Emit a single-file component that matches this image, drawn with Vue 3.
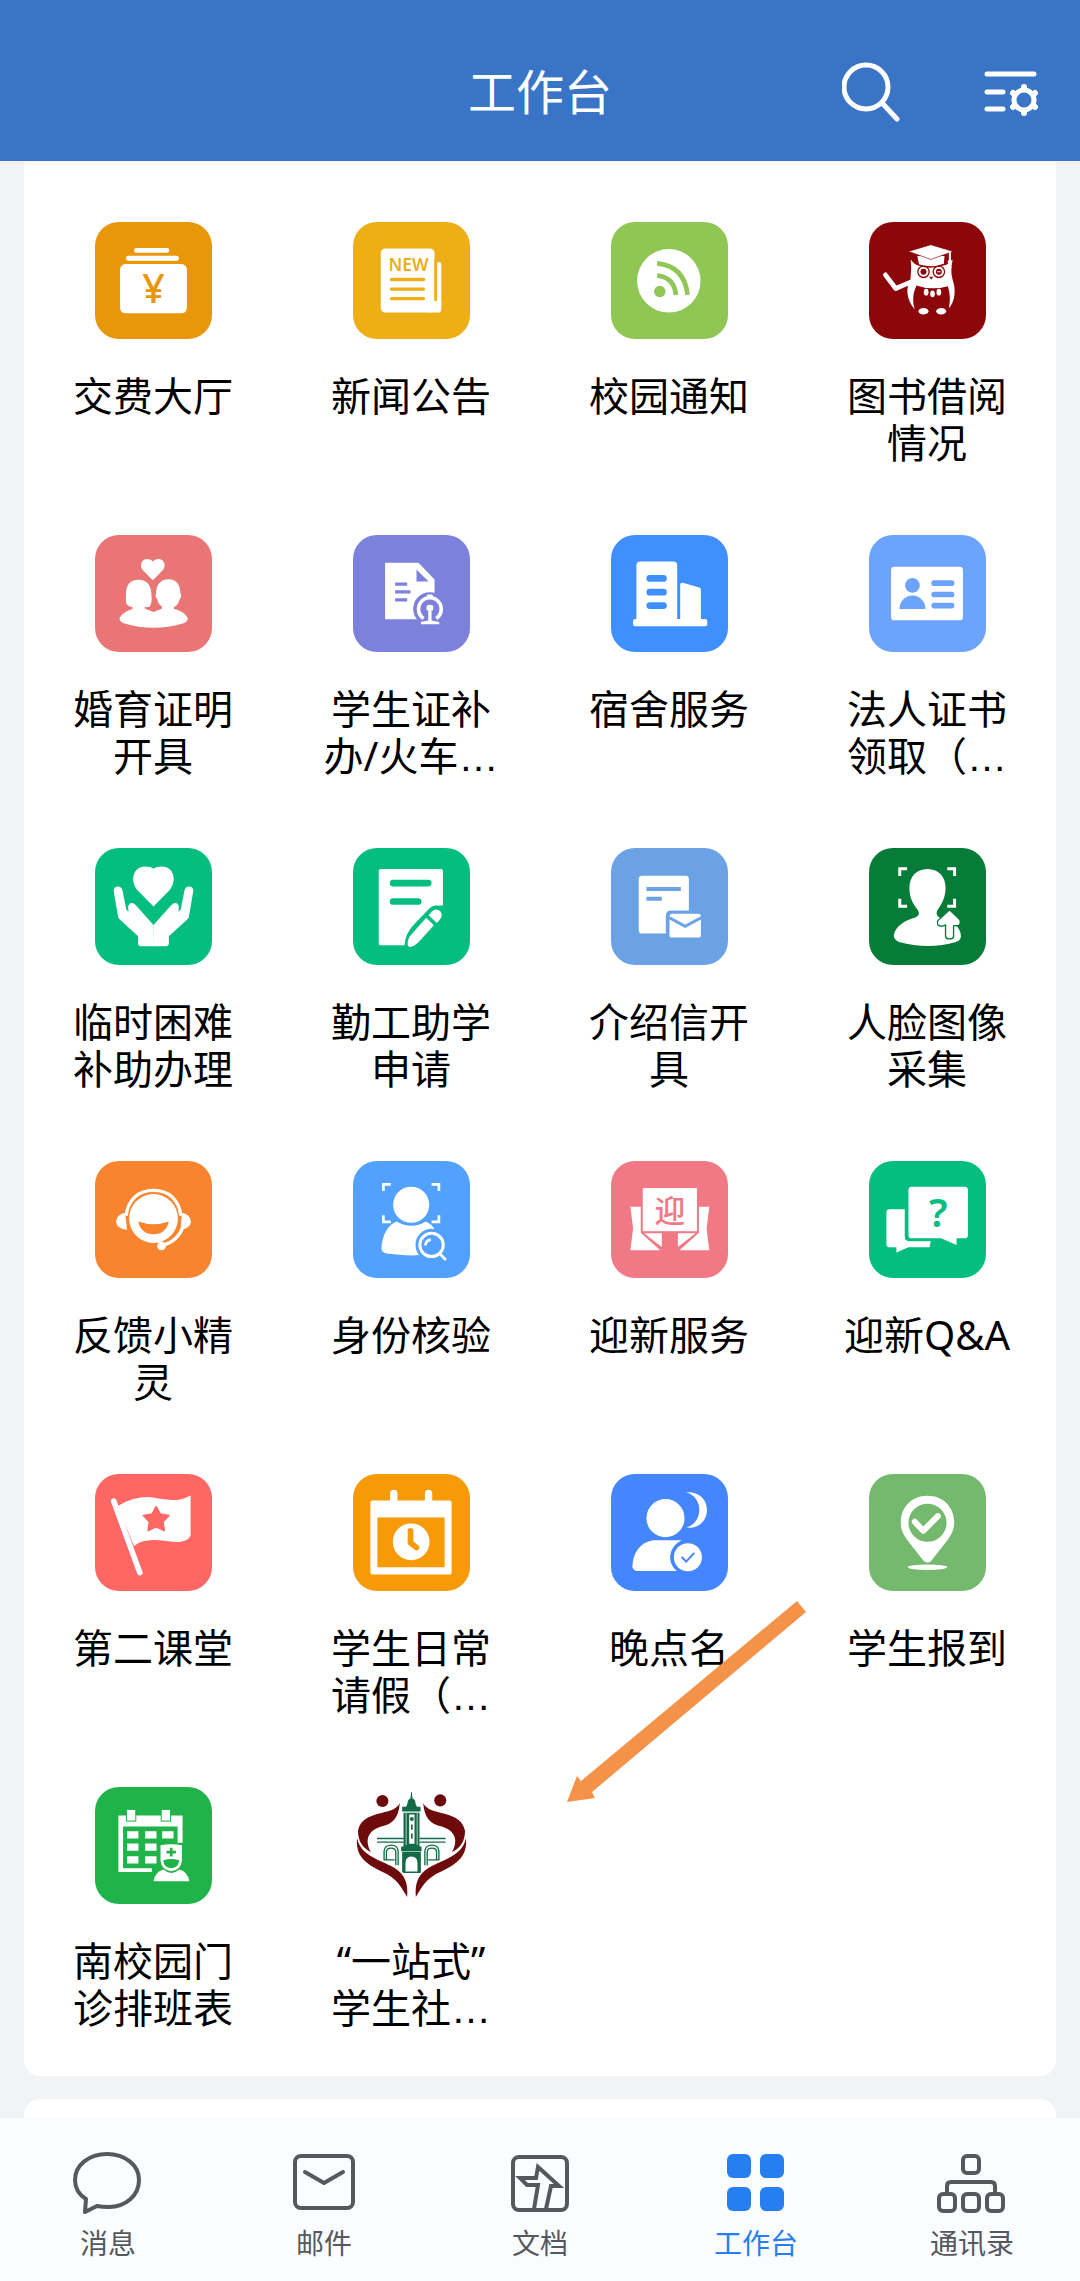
<template>
  <div class="workbench">
    <header class="top-bar">
      <h1 class="top-title">工作台</h1>
      <div class="top-actions">
        <button type="button" class="top-btn" aria-label="搜索">
          <svg width="60" height="60" viewBox="0 0 60 60" fill="none" stroke="#fff" stroke-width="5" stroke-linecap="round">
            <circle cx="24" cy="25" r="22" />
            <path d="M41 42L55 57" />
          </svg>
        </button>
        <button type="button" class="top-btn" aria-label="设置">
          <svg width="56" height="60" viewBox="0 0 56 60" fill="none" stroke="#fff" stroke-width="5" stroke-linecap="round">
            <path d="M3 12H50M3 30H19M3 47H19" />
            <circle cx="40" cy="38" r="10" />
            <path stroke-width="6" d="M40 26V25M40 50V51M50 32L51 31M50 44L51 45M30 32L29 31M30 44L29 45" />
          </svg>
        </button>
      </div>
    </header>

    <main class="content">
      <section class="card">
        <ul class="app-grid">
          <li v-for="app in apps" :key="app.name">
            <a href="#" class="app-link">
              <svg class="app-icon" viewBox="0 0 350 350" :style="{ background: app.color, color: app.color }" v-html="app.icon"></svg>
              <span class="app-name">{{ app.name }}<span v-if="app.cut" class="dots">…</span></span>
            </a>
          </li>
        </ul>
        <svg class="pointer" width="240" height="202" viewBox="0 0 240 202">
          <path d="M230 0L239 11L25 191L28 197L0 201L10 175L14 180Z" fill="#f4924a" />
        </svg>
      </section>
      <section class="card next-card"></section>
    </main>

    <nav class="tab-bar">
      <a v-for="tab in tabs" :key="tab.name" href="#" class="tab" :class="{ active: tab.active }">
        <svg class="tab-icon" viewBox="0 0 72 64" v-html="tab.icon"></svg>
        <span>{{ tab.name }}</span>
      </a>
    </nav>
  </div>
</template>

<script setup>
// Внутри иконок currentColor — это цвет плитки
const apps = [
  {
    name: '交费大厅',
    color: '#e8960a',
    icon: `<g fill="#fff"><rect x="117" y="78" width="105" height="14" rx="6"/><rect x="93" y="101" width="158" height="15" rx="7"/><rect x="75" y="126" width="200" height="147" rx="16"/></g>
      <text x="175" y="241" font-size="118" font-weight="500" text-anchor="middle" fill="currentColor">¥</text>`
  },
  {
    name: '新闻公告',
    color: '#eeae15',
    icon: `<g fill="#fff"><rect x="83" y="79" width="161" height="192" rx="14"/><rect x="251" y="120" width="13" height="140" rx="6"/><path d="M225 236H264V261Q264 271 254 271H225Z"/></g>
      <path d="M247 110V234" stroke="currentColor" stroke-width="7"/>
      <text x="166" y="148" font-size="52" font-weight="600" text-anchor="middle" fill="currentColor">NEW</text>
      <path d="M115 172H211M115 201H211M115 229H211" stroke="currentColor" stroke-width="10" stroke-linecap="round"/>`
  },
  {
    name: '校园通知',
    color: '#8fc654',
    icon: `<circle cx="173" cy="176" r="95" fill="#fff"/><circle cx="146" cy="208" r="17" fill="currentColor"/>
      <path d="M138 160Q190 166 194 218M138 124Q220 132 229 218" fill="none" stroke="currentColor" stroke-width="14"/>`
  },
  {
    name: '图书借阅情况',
    color: '#8c0709',
    icon: `<path d="M49 158L80 199L124 180" fill="none" stroke="#fff" stroke-width="14" stroke-linecap="round" stroke-linejoin="round"/>
      <path d="M125 112Q136 128 150 130H222Q238 128 250 112Q243 148 250 172C262 205 256 240 239 258Q246 222 236 192Q186 206 142 190C130 215 130 240 137 262C110 230 110 195 124 172Q128 140 125 112Z" fill="#fff"/>
      <path d="M142 100L148 128Q187 142 226 126L228 100Z" fill="#fff" stroke="currentColor" stroke-width="4"/>
      <path d="M118 88L185 68L252 88L185 112Z" fill="#fff" stroke="currentColor" stroke-width="2"/>
      <path d="M242 90V114" stroke="#fff" stroke-width="6"/><circle cx="242" cy="120" r="7" fill="#fff"/>
      <g fill="none" stroke="currentColor" stroke-width="4"><circle cx="163" cy="149" r="17"/><circle cx="209" cy="149" r="17"/></g>
      <circle cx="163" cy="149" r="9" fill="currentColor"/><circle cx="209" cy="149" r="9" fill="currentColor"/><path d="M204 149H214" stroke="#fff" stroke-width="3"/>
      <path d="M180 164H192L186 173Z" fill="currentColor"/>
      <g fill="#fff"><ellipse cx="171" cy="210" rx="7" ry="10"/><ellipse cx="190" cy="215" rx="7" ry="10"/><ellipse cx="209" cy="210" rx="7" ry="10"/><ellipse cx="163" cy="267" rx="15" ry="10"/><ellipse cx="216" cy="267" rx="15" ry="10"/></g>`
  },
  {
    name: '婚育证明开具',
    color: '#e97675',
    icon: `<g fill="#fff"><path d="M173 135L142 104C132 91 140 72 156 72Q168 72 173 80Q178 72 190 72C206 72 214 91 204 104Z"/>
      <path d="M93 182C91 150 105 134 130 134C155 134 169 150 169 182C170 195 170 205 164 214Q154 218 149 215V222H112V215Q100 216 94 206Q91 195 93 182Z"/>
      <path d="M183 172C184 146 198 132 220 132C242 132 254 146 255 170L258 183L252 196Q247 211 236 216V222H200V214Q188 206 187 194L181 184Z"/>
      <path d="M73 250C80 235 98 225 118 220H148L175 230L202 220H232C254 225 272 235 278 250Q276 260 265 264Q175 291 86 264Q74 259 73 250Z"/></g>`
  },
  {
    name: '学生证补办/火车',
    cut: true,
    color: '#7c81dc',
    icon: `<path d="M96 83H196L244 133V252H96Z" fill="#fff"/><path d="M190 103V139H226Z" fill="currentColor"/>
      <path d="M126 147H162M126 170H172M126 194H162" stroke="currentColor" stroke-width="10"/>
      <circle cx="230" cy="221" r="50" fill="currentColor"/>
      <path d="M211 250A34 34 0 1 1 249 250" fill="none" stroke="#fff" stroke-width="11"/>
      <g fill="#fff"><rect x="221" y="178" width="18" height="12" rx="4"/><path d="M220 214Q220 209 230 209Q240 209 240 214V225H235V256L258 260V267H203V260L225 256V225H220Z"/></g>`
  },
  {
    name: '宿舍服务',
    color: '#3f8fff',
    icon: `<g fill="#fff"><rect x="76" y="79" width="122" height="184" rx="12"/><path d="M207 255V149Q207 141 215 143L264 157Q269 158 269 164V255Z"/><rect x="66" y="251" width="222" height="22" rx="6"/></g>
      <path d="M116 130H157M116 171H157M116 211H157" stroke="currentColor" stroke-width="20" stroke-linecap="round"/>`
  },
  {
    name: '法人证书领取（',
    cut: true,
    color: '#6ca4fd',
    icon: `<rect x="66" y="95" width="215" height="160" rx="10" fill="#fff"/>
      <circle cx="130" cy="151" r="22" fill="currentColor"/><path d="M91 221A39 40 0 0 1 169 221Z" fill="currentColor"/>
      <path d="M195 144H247M195 178H247M195 211H247" stroke="currentColor" stroke-width="17" stroke-linecap="round"/>`
  },
  {
    name: '临时困难补助办理',
    color: '#04be80',
    icon: `<g fill="#fff"><path d="M175 175L128 127C103 97 114 56 149 55Q167 55 175 62Q183 55 201 55C236 56 247 97 222 127Z"/>
      <path d="M175 230L122 171Q113 161 104 166Q96 173 101 190Q93 187 93 181L82 126Q79 114 67 115Q55 117 56 129L69 205Q70 211 75 215L129 264V284Q129 294 139 294H176Z"/>
      <path d="M175 230L228 171Q237 161 246 166Q254 173 249 190Q257 187 257 181L268 126Q271 114 283 115Q295 117 294 129L281 205Q280 211 275 215L221 264V284Q221 294 211 294H174Z"/></g>`
  },
  {
    name: '勤工助学申请',
    color: '#04be80',
    icon: `<path d="M83 63H263Q269 63 269 69V172H247Q237 172 229 180L185 226Q156 255 154 291H83Q77 291 77 285V69Q77 63 83 63Z" fill="#fff"/>
      <path d="M120 105H225M120 160H195" stroke="currentColor" stroke-width="20" stroke-linecap="round"/>
      <g fill="#fff"><path d="M219 209L242 231L195 283Q178 299 166 295Q159 285 170 264Z"/><path d="M226 201L236 190Q248 178 261 189Q271 201 260 214L251 224Z"/></g>`
  },
  {
    name: '介绍信开具',
    color: '#6ba2e5',
    icon: `<rect x="83" y="83" width="150" height="173" rx="10" fill="#fff"/>
      <path d="M106 123H209M106 152H152" stroke="currentColor" stroke-width="12"/>
      <path d="M164 275V203Q164 187 180 187H280V275Z" fill="currentColor"/>
      <rect x="175" y="197" width="94" height="71" rx="8" fill="#fff"/><path d="M173 208L222 234L271 208" fill="none" stroke="currentColor" stroke-width="9"/>`
  },
  {
    name: '人脸图像采集',
    color: '#067c38',
    icon: `<path d="M92 84V62H114M234 62H256V84M256 152V174H234M114 174H92V152" fill="none" stroke="#fff" stroke-width="9"/>
      <path d="M175 63C210 63 230 88 229 121C228 153 215 170 204 187Q198 203 213 209C248 217 275 236 275 264Q275 276 260 281Q178 305 90 281Q75 275 74 262C78 235 107 216 138 208Q154 202 147 187C134 169 121 153 121 121C120 88 140 63 175 63Z" fill="#fff"/>
      <path d="M241 185L272 215Q276 224 269 232H253V265Q252 272 241 272Q230 272 229 265V230Q216 238 206 230Q203 223 207 216Z" fill="#fff" stroke="currentColor" stroke-width="4" stroke-linejoin="round"/>`
  },
  {
    name: '反馈小精灵',
    color: '#f88430',
    icon: `<circle cx="175" cy="172" r="73" fill="#fff"/><path d="M129 181Q175 197 221 181Q212 219 175 219Q138 219 129 181Z" fill="currentColor"/>
      <path d="M93 164C99 113 132 88 175 88C218 88 251 113 257 164M264 195Q247 242 202 252" fill="none" stroke="#fff" stroke-width="10"/>
      <g fill="#fff"><path d="M90 155L96 206Q64 203 63 181Q65 160 90 155Z"/><path d="M260 155L256 206Q286 201 287 181Q285 160 260 155Z"/><circle cx="199" cy="254" r="13"/></g>`
  },
  {
    name: '身份核验',
    color: '#52a1ff',
    icon: `<path d="M91 90V70H113M235 70H257V90M257 162V182H235M113 182H91V162" fill="none" stroke="#fff" stroke-width="8"/>
      <path d="M131 181Q175 207 217 181C243 190 258 220 263 265Q220 292 100 277Q86 274 85 262C87 222 105 189 131 181Z" fill="#fff"/>
      <circle cx="174" cy="131" r="54" fill="#fff"/>
      <path d="M247 200H290V295H240Z" fill="currentColor"/><circle cx="235" cy="251" r="48" fill="currentColor"/>
      <circle cx="235" cy="251" r="35" fill="none" stroke="#fff" stroke-width="9"/><path d="M217 253Q217 237 233 235M261 279L278 296" fill="none" stroke="#fff" stroke-width="8"/>`
  },
  {
    name: '迎新服务',
    color: '#f17986',
    icon: `<g fill="#fff"><rect x="95" y="81" width="162" height="129"/><path d="M58 137H89V215L147 267H58L66 203Z"/><path d="M294 137H263V215L205 267H294L286 203Z"/><path d="M99 216H152V257Z"/><path d="M253 216H200V257Z"/></g>
      <text x="176" y="181" font-size="92" font-weight="500" text-anchor="middle" fill="currentColor">迎</text>`
  },
  {
    name: '迎新Q&A',
    color: '#04be80',
    icon: `<g fill="#fff"><path d="M62 144H107V226Q107 240 121 240H185L181 258H118L82 274V258H62Q52 258 52 248V154Q52 144 62 144Z"/><path d="M128 77H286Q296 77 296 87V221Q296 231 286 231H262V251L216 231H128Q118 231 118 221V87Q118 77 128 77Z"/></g>
      <text x="207" y="198" font-size="120" font-weight="600" text-anchor="middle" fill="currentColor">?</text>`
  },
  {
    name: '第二课堂',
    color: '#ff6664',
    icon: `<path d="M56 81L134 295" stroke="#fff" stroke-width="17" stroke-linecap="round"/>
      <path d="M68 96Q110 69 160 69C200 71 235 91 286 64V184C276 207 240 206 203 199Q140 192 117 216Z" fill="#fff"/>
      <path d="M183 98L195 120L221 124L203 143L207 169L183 158L159 169L163 143L145 124L171 120Z" fill="currentColor" stroke="currentColor" stroke-width="5" stroke-linejoin="round"/>`
  },
  {
    name: '学生日常请假（',
    cut: true,
    color: '#f69a07',
    icon: `<g fill="#fff"><rect x="111" y="47" width="22" height="45" rx="11"/><rect x="215" y="47" width="22" height="45" rx="11"/><rect x="52" y="79" width="243" height="222" rx="6"/></g>
      <rect x="73" y="130" width="201" height="149" fill="currentColor"/><circle cx="174" cy="203" r="55" fill="#fff"/>
      <path d="M172 170V206L190 220" fill="none" stroke="currentColor" stroke-width="17" stroke-linecap="round" stroke-linejoin="round"/>`
  },
  {
    name: '晚点名',
    color: '#4386fd',
    icon: `<g fill="#fff"><circle cx="163" cy="132" r="57"/><path d="M125 198H207Q230 206 235 230V290H82Q64 290 64 276C65 235 88 204 125 198Z"/><path d="M226 55C260 53 287 73 287 108C287 143 258 166 226 160C277 145 277 69 226 55Z"/></g>
      <circle cx="230" cy="249" r="53" fill="currentColor"/><circle cx="230" cy="249" r="42" fill="#fff"/><path d="M211 248L225 262L249 236" fill="none" stroke="currentColor" stroke-width="6"/>`
  },
  {
    name: '学生报到',
    color: '#74b96d',
    icon: `<path fill="#fff" fill-rule="evenodd" d="M175 65C221 65 255 98 255 145C254 179 238 194 186 260Q175 270 164 260C112 194 95 179 95 145C95 98 129 65 175 65ZM175 89A57 57 0 1 0 175 203A57 57 0 1 0 175 89Z"/>
      <path d="M137 143L162 170L206 126" fill="none" stroke="#fff" stroke-width="18" stroke-linecap="round" stroke-linejoin="round"/><ellipse cx="175" cy="279" rx="59" ry="8" fill="#fff"/>`
  },
  {
    name: '南校园门诊排班表',
    color: '#1fb349',
    icon: `<path fill="#fff" fill-rule="evenodd" d="M70 85H262V254H70ZM84 118V243H247V118Z"/>
      <g fill="#fff" stroke="currentColor" stroke-width="3"><rect x="94" y="67" width="28" height="35"/><rect x="198" y="67" width="28" height="35"/></g>
      <path fill="#fff" d="M96 132H130V154H96ZM150 132H184V154H150ZM201 132H235V154H201ZM96 169H130V191H96ZM150 169H184V191H150ZM96 207H130V229H96ZM150 207H184V229H150Z"/>
      <path fill="currentColor" d="M190 167H270V285H170V240L190 230Z"/>
      <path fill="#fff" d="M175 282Q180 253 205 247Q228 268 252 247Q278 253 282 282ZM196 174Q228 168 260 174V220Q258 248 228 252Q198 248 196 220Z"/>
      <path fill="currentColor" d="M204 219Q228 212 252 219Q250 241 228 243Q206 241 204 219Z"/><path d="M228 182V208M214 195H242" stroke="currentColor" stroke-width="8"/>`
  },
  {
    name: '“一站式”\n学生社',
    cut: true,
    color: '#fff',
    icon: `<g fill="#6c0a0c"><circle cx="88" cy="42" r="18"/><circle cx="261" cy="40" r="18"/>
      <path d="M140 48C120 90 30 65 15 130Q14 175 54 195C35 163 42 132 82 119C122 111 136 91 140 48Z"/>
      <path d="M210 48C230 90 320 65 335 130Q336 175 296 195C315 163 308 132 268 119C228 111 214 91 210 48Z"/>
      <path d="M12 153C5 224 66 240 104 262C136 282 145 301 162 329C165 290 157 262 122 241C79 215 25 208 12 153Z"/>
      <path d="M338 153C345 224 284 240 246 262C214 282 205 301 188 329C185 290 193 262 228 241C271 215 325 208 338 153Z"/></g>
      <g fill="#126b46"><path d="M174 15H176L178 34Q187 39 187 49L191 59H202V73H147V59H159L163 49Q163 39 172 34Z"/><path d="M151 77H199V178H205V192H144V178H151Z"/><path d="M147 194H203V255H193V228Q193 208 175 208Q157 208 157 228V255H147Z"/></g>
      <path fill="#fff" d="M168 82H184V170H168Z"/><path d="M159 78V174M192 78V174" stroke="#fff" stroke-width="2"/><circle cx="176" cy="96" r="6" fill="#126b46"/><path d="M176 112V128M176 139V155" stroke="#126b46" stroke-width="5"/>
      <g fill="none" stroke="#126b46" stroke-width="4"><path d="M72 154H151M72 165H151M199 154H277M199 165H277"/><path d="M93 220V192Q95 174 114 174Q133 174 135 192V234M100 219V194Q101 183 114 183Q127 183 128 194V234M93 218H125M257 220V192Q255 174 236 174Q217 174 215 192V234M250 219V194Q249 183 236 183Q223 183 222 194V234M225 218H257M150 255H202"/></g>`
  }
]

const tabs = [
  {
    name: '消息',
    icon: '<path fill="none" stroke="currentColor" stroke-width="4" stroke-linejoin="round" d="M13 61L14 48C6 43 3 36 3 29C3 14 17 3 35 3C53 3 67 14 67 29C67 45 53 56 37 56Q30 56 25 55Z"/>'
  },
  {
    name: '邮件',
    icon: '<g fill="none" stroke="currentColor" stroke-width="4" stroke-linecap="round" stroke-linejoin="round"><rect x="7" y="5" width="58" height="52" rx="6"/><path d="M17 21L36 32L55 21"/></g>'
  },
  {
    name: '文档',
    icon: '<g fill="none" stroke="currentColor" stroke-width="4"><rect x="9" y="6" width="54" height="53" rx="6"/><path d="M30 58L34 34H23L16 27H32L34 16L55 35H47L42 58"/></g>'
  },
  {
    name: '工作台',
    active: true,
    icon: '<g fill="currentColor"><rect x="7" y="3" width="24" height="24" rx="6"/><rect x="40" y="3" width="24" height="24" rx="6"/><rect x="7" y="36" width="24" height="24" rx="6"/><rect x="40" y="36" width="24" height="24" rx="6"/></g>'
  },
  {
    name: '通讯录',
    icon: '<g fill="none" stroke="currentColor" stroke-width="4"><rect x="27" y="5" width="16" height="17" rx="4"/><path d="M11 42V35Q11 31 15 31H55Q59 31 59 35V42"/><rect x="3" y="43" width="16" height="17" rx="4"/><rect x="27" y="43" width="16" height="17" rx="4"/><rect x="51" y="43" width="16" height="17" rx="4"/></g>'
  }
]
</script>

<style>
body {
  margin: 0;
  background: #f2f3f5;
}
</style>

<style scoped>
.workbench {
  height: 100vh;
  display: flex;
  flex-direction: column;
  font-family: "Noto Sans", "Noto Sans CJK SC", sans-serif;
  color: #000;
}

.top-bar {
  display: grid;
  grid-template-columns: 1fr auto 1fr;
  align-items: center;
  padding: 62px 40px 39px;
  background: #3974c6;
  color: #fff;
}

.top-title {
  grid-column: 2;
  margin: 0;
  font-size: 48px;
  font-weight: 400;
  line-height: 60px;
}

.top-actions {
  display: flex;
  justify-content: flex-end;
  gap: 82px;
}

.top-btn {
  display: block;
  padding: 0;
  border: none;
  background: none;
  cursor: pointer;
}

.top-btn svg {
  display: block;
}

.content {
  flex: 1;
  min-height: 0;
  overflow-y: auto;
  scrollbar-width: none;
  padding: 0 24px;
}

.card {
  position: relative;
  background: #fff;
  border-radius: 0 0 16px 16px;
}

.next-card {
  height: 120px;
  margin-top: 23px;
  border-radius: 16px;
}

.app-grid {
  display: grid;
  grid-template-columns: repeat(4, 1fr);
  row-gap: 69px;
  margin: 0;
  padding: 61px 0 45px;
  list-style: none;
}

.app-link {
  display: flex;
  flex-direction: column;
  align-items: center;
  gap: 33px;
  color: inherit;
  text-decoration: none;
}

.app-icon {
  width: 117px;
  height: 117px;
  border-radius: 24px;
}

.app-name {
  width: 180px;
  height: 94px;
  font-size: 40px;
  line-height: 47px;
  text-align: center;
  white-space: pre-line;
}

.dots {
  font-family: "Liberation Sans", sans-serif;
}

/* Стрелка-подсказка поверх сетки */
.pointer {
  position: absolute;
  top: 1440px;
  left: calc(50% + 27px);
  pointer-events: none;
}

.tab-bar {
  display: grid;
  grid-template-columns: repeat(5, 1fr);
  padding: 33px 0 22px;
  background: #fafcff;
}

.tab {
  display: flex;
  flex-direction: column;
  align-items: center;
  gap: 12px;
  color: #55585c;
  font-size: 28px;
  line-height: 32px;
  text-decoration: none;
}

.tab-icon {
  width: 72px;
  height: 64px;
}

.tab.active {
  color: #267ef0;
}
</style>
